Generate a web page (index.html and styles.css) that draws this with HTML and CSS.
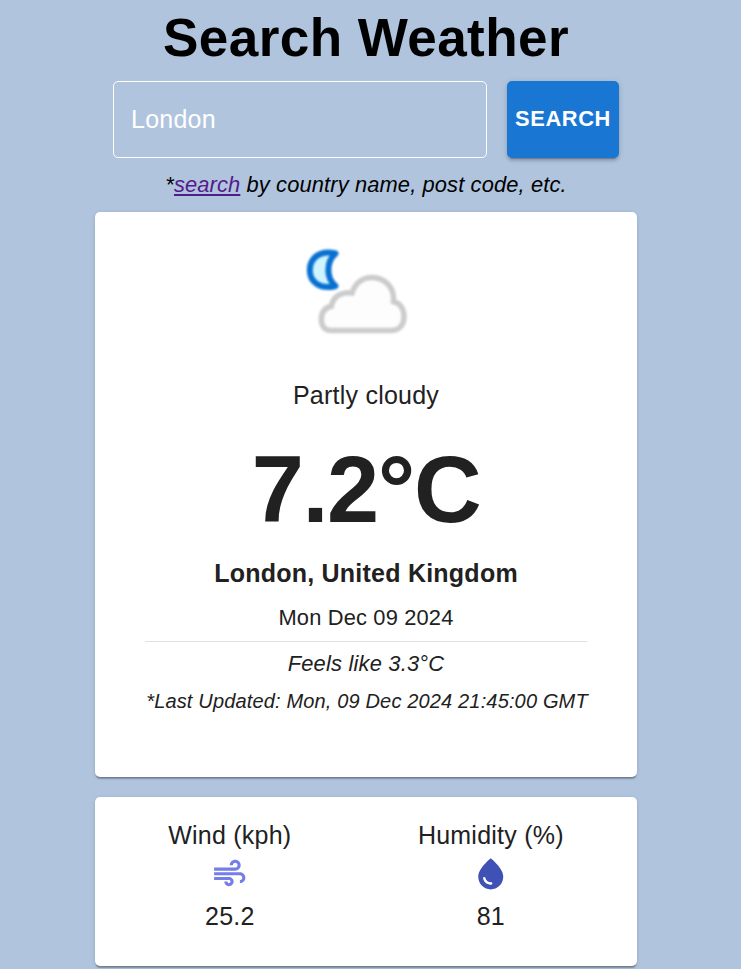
FILE: index.html
```html
<!DOCTYPE html>
<html lang="en">
<head>
<meta charset="utf-8">
<title>Search Weather</title>
<link rel="stylesheet" href="styles.css">
</head>
<body>
<main class="app">
  <h1 class="title">Search Weather</h1>
  <form class="search">
    <input class="search-input" type="text" value="London" aria-label="Location">
    <button class="search-button" type="button">SEARCH</button>
  </form>
  <p class="hint">*<a class="hint-link" href="#">search</a> by country name, post code, etc.</p>
  <section class="card current">
    <svg class="condition-icon" viewBox="0 0 140 110" aria-hidden="true">
      <path class="moon" d="M45.500 18.500C30 14.500 19.800 23 19.800 35C19.800 47 30 55 45.500 51C36 43 36 27 45.500 18.500Z"/>
      <path class="cloud" d="M41 95.500H101C109 95.500 114 90 114 81.500C114 74 110 68 103.500 66.500C105 53 95 42.500 82 42.500C72 42.500 65 48.500 62 58C52 56.500 43 61 41.500 71C34.500 73 31.300 77.500 31.300 84C31.300 91 35 95.500 41 95.500Z"/>
    </svg>
    <p class="condition">Partly cloudy</p>
    <p class="temperature">7.2°C</p>
    <p class="place">London, United Kingdom</p>
    <p class="date">Mon Dec 09 2024</p>
    <hr class="divider">
    <p class="feels">Feels like 3.3°C</p>
    <p class="updated">*Last Updated: Mon, 09 Dec 2024 21:45:00 GMT</p>
  </section>
  <section class="card details">
    <div class="metric">
      <p class="wind-label">Wind (kph)</p>
      <svg class="metric-icon wind" viewBox="0 0 24 24" aria-hidden="true"><path d="M14.500 17c0 1.650-1.350 3-3 3s-3-1.350-3-3h2c0 .55.45 1 1 1s1-.45 1-1-.45-1-1-1H2v-2h9.500c1.650 0 3 1.350 3 3M19 6.500C19 4.570 17.430 3 15.500 3S12 4.570 12 6.500h2c0-.83.67-1.500 1.500-1.500s1.500.67 1.500 1.500S16.330 8 15.500 8H2v2h13.500c1.930 0 3.500-1.570 3.500-3.500m-.5 4.500H2v2h16.500c.83 0 1.500.67 1.500 1.500s-.67 1.500-1.500 1.500v2c1.930 0 3.500-1.570 3.500-3.500S20.430 11 18.500 11"/></svg>
      <p>25.2</p>
    </div>
    <div class="metric">
      <p class="humidity-label">Humidity (%)</p>
      <svg class="metric-icon drop" viewBox="0 0 24 24" aria-hidden="true"><path d="M12 2c-5.330 4.550-8 8.480-8 11.800 0 4.980 3.800 8.200 8 8.200s8-3.220 8-8.200c0-3.320-2.670-7.250-8-11.800m-4.170 12c.37 0 .67.26.74.62.41 2.220 2.280 2.980 3.640 2.870.43-.02.79.32.79.75 0 .4-.32.73-.72.75-2.130.13-4.620-1.090-5.190-4.120-.08-.45.28-.87.74-.87"/></svg>
      <p>81</p>
    </div>
  </section>
</main>
</body>
</html>
```
FILE: styles.css
```css
* { box-sizing: border-box; }
body {
  margin: 0;
  background: #b0c4de;
  color: #000;
  font-family: "Liberation Sans", Arial, sans-serif;
}
p, h1 { margin: 0; }
.app {
  width: 732px;
  height: 969px;
  padding-top: 5px;
  overflow: hidden;
  display: flex;
  flex-direction: column;
  align-items: center;
  text-align: center;
}
.title {
  font-size: 53.125px;
  line-height: 66px;
  letter-spacing: 0.00735em;
  white-space: nowrap;
}
.search {
  display: flex;
  gap: 20px;
  margin-top: 10px;
  height: 77px;
}
.search-input {
  width: 374px;
  padding: 0 17px;
  border: 1px solid #fff;
  border-radius: 5px;
  background: transparent;
  color: #fff;
  font: 25px "Liberation Sans", Arial, sans-serif;
  letter-spacing: 0.00938em;
  outline: none;
}
.search-button {
  width: 112px;
  padding: 0 0 2px;
  border: 0;
  border-radius: 5px;
  background: #1976d2;
  color: #fff;
  font: bold 21.875px "Liberation Sans", Arial, sans-serif;
  letter-spacing: 0.02857em;
  box-shadow: 0 4px 1px -3px rgba(0,0,0,.2), 0 3px 3px rgba(0,0,0,.14), 0 1px 6px rgba(0,0,0,.12);
}
.hint {
  margin-top: 10px;
  font-size: 21.875px;
  line-height: 33px;
  font-style: italic;
  letter-spacing: 0.006em;
}
.hint-link { color: #551a8b; }
.card {
  width: 542px;
  flex: none;
  border-radius: 5px;
  background: #fff;
  color: #212121;
  box-shadow: 0 3px 1px -1px rgba(0,0,0,.2), 0 1px 1px rgba(0,0,0,.14), 0 1px 4px rgba(0,0,0,.12);
}
.current {
  height: 565px;
  margin-top: 11px;
  padding: 23px 50px 0;
  display: flex;
  flex-direction: column;
  align-items: center;
}
.current p { white-space: nowrap; }
.condition-icon { width: 140px; height: 110px; margin-right: 12px; filter: blur(.8px); }
.moon { fill: #d0f4ff; stroke: #0870d0; stroke-width: 6; stroke-linejoin: round; }
.cloud { fill: #fdfdfd; stroke: #ccc; stroke-width: 5.500px; }
.condition {
  margin-top: 32px;
  font-size: 25px;
  line-height: 37px;
  letter-spacing: 0.00938em;
}
.temperature {
  margin-top: 20px;
  font-size: 93.75px;
  font-weight: bold;
  line-height: 112px;
  letter-spacing: -0.0145em;
}
.place {
  margin-top: 9px;
  font-size: 25px;
  font-weight: bold;
  line-height: 37px;
  letter-spacing: 0.00938em;
}
.date {
  margin-top: 10px;
  font-size: 21.875px;
  line-height: 31px;
  letter-spacing: 0.0075em;
}
.divider { width: 442px; height: 1px; margin: 8px 0 6px; border: 0; background: #e0e0e0; }
.feels {
  font-size: 21.875px;
  font-style: italic;
  line-height: 31px;
  letter-spacing: 0.00938em;
}
.updated {
  margin-top: 7px;
  margin-left: 2px;
  font-size: 20px;
  font-style: italic;
  line-height: 31px;
  letter-spacing: 0.0078em;
}
.details {
  height: 169px;
  margin-top: 20px;
  padding: 20px 10px 0;
  display: flex;
  justify-content: space-around;
}
.metric {
  display: flex;
  flex-direction: column;
  align-items: center;
  font-size: 25px;
  line-height: 37px;
  letter-spacing: 0.00938em;
}
.metric-icon { width: 37.5px; height: 37.5px; margin: 1px 0 5px; }
.wind { fill: #757de8; }
.drop { fill: #3f51b5; }
```
